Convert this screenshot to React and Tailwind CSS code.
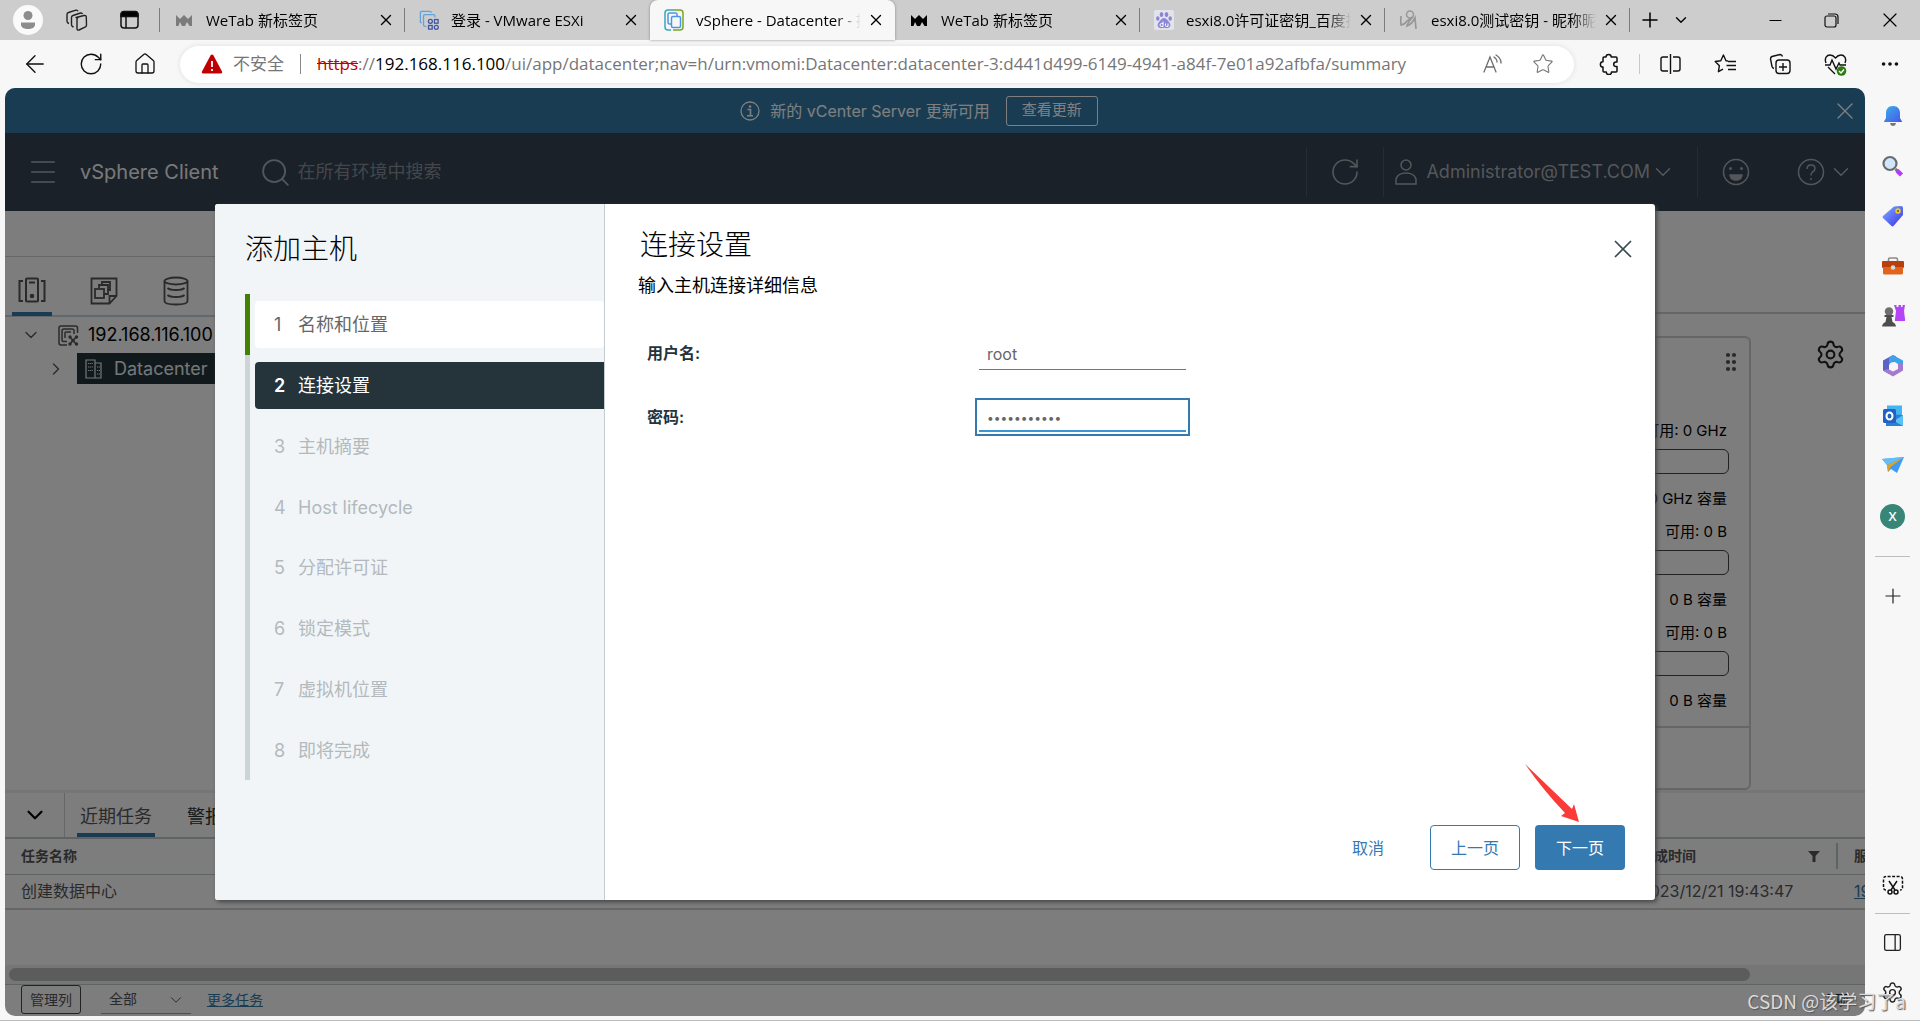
import React, { useState } from "react";
import {
  ArrowLeft,
  ChevronDown,
  ChevronRight,
  Ellipsis,
  GripVertical,
  House,
  Menu,
  Minus,
  PanelRight,
  Plus,
  RotateCw,
  Search,
  Settings,
  Star,
  X,
} from "lucide-react";

const tabs = [
  { title: "WeTab 新标签页", icon: "wetabGray" },
  { title: "登录 - VMware ESXi", icon: "esxi" },
  { title: "vSphere - Datacenter - 摘", icon: "vsphere", active: true },
  { title: "WeTab 新标签页", icon: "wetab" },
  { title: "esxi8.0许可证密钥_百度搜", icon: "baidu" },
  { title: "esxi8.0测试密钥 - 昵称昵", icon: "nick" },
];

const steps = [
  "名称和位置",
  "连接设置",
  "主机摘要",
  "Host lifecycle",
  "分配许可证",
  "锁定模式",
  "虚拟机位置",
  "即将完成",
];

const capacity = [
  { free: "可用: 0 GHz", total: "0 GHz 容量" },
  { free: "可用: 0 B", total: "0 B 容量" },
  { free: "可用: 0 B", total: "0 B 容量" },
];

function Favicon({ name }) {
  if (name === "wetab" || name === "wetabGray") {
    return (
      <svg width="20" height="20" viewBox="0 0 20 20" className="shrink-0">
        <path
          d="M2 5l4 4 4-4 4 4 4-4v11h-2.500l-2.500-4-2 4H8l-2-4-1.500 4H2z"
          fill={name === "wetab" ? "#000" : "#7b7b7b"}
        />
      </svg>
    );
  }
  if (name === "esxi") {
    return (
      <svg width="20" height="22" viewBox="0 0 22 22" fill="none" className="shrink-0">
        <path d="M3 14H2.500Q1.500 14 1.500 13V3Q1.500 1.500 3 1.500H12Q13.500 1.500 13.500 3" stroke="#5ea3e0" strokeWidth="1.400" />
        <path d="M8 18H6.500Q5 18 5 16.500V6.500Q5 5 6.500 5H16Q17.500 5 17.500 6.500V8" stroke="#5ea3e0" strokeWidth="1.400" />
        <g stroke="#4054a0" strokeWidth="1.400">
          <circle cx="12.500" cy="12.500" r="2.200" />
          <rect x="17" y="10.500" width="4" height="4" />
          <rect x="10.500" y="17" width="4" height="4" />
          <circle cx="19" cy="19" r="2.200" />
        </g>
      </svg>
    );
  }
  if (name === "vsphere") {
    return (
      <svg width="20" height="22" viewBox="0 0 20 22" fill="none" className="shrink-0">
        <path d="M10 1H4Q1 1 1 4V18Q1 21 4 21H7" stroke="#3aa7b8" strokeWidth="1.500" />
        <path d="M10 1H16Q19 1 19 4V18Q19 21 16 21H9" stroke="#78a81c" strokeWidth="1.500" />
        <rect x="4" y="4" width="9" height="11" rx="1.500" stroke="#4b96e6" strokeWidth="1.500" />
        <rect x="7.500" y="7.500" width="9" height="11" rx="1.500" fill="#f7f7f7" stroke="#4b96e6" strokeWidth="1.500" />
      </svg>
    );
  }
  if (name === "baidu") {
    return (
      <svg width="20" height="20" viewBox="0 0 20 20" className="shrink-0">
        <rect width="20" height="20" rx="2" fill="#e3e3ea" />
        <g fill="#8c86d8">
          <ellipse cx="7.500" cy="4.500" rx="1.800" ry="2.600" />
          <ellipse cx="12.500" cy="4.500" rx="1.800" ry="2.600" />
          <ellipse cx="3.800" cy="8.500" rx="1.700" ry="2.300" />
          <ellipse cx="16.200" cy="8.500" rx="1.700" ry="2.300" />
          <path d="M10 8c2.500 0 3.500 2.500 5 4s2.500 5-1 6c-1.500.4-2.500-.2-4-.2s-2.500.6-4 .2c-3.500-1-2.500-4.500-1-6s2.500-4 5-4z" />
        </g>
        <path d="M9 11.500v5H7.500a1.500 1.500 0 010-3H9M11.500 13.500v2q0 1 1 1h1.500v-3" fill="none" stroke="#fff" />
      </svg>
    );
  }
  return (
    <svg width="20" height="20" viewBox="0 0 20 20" fill="none" stroke="#979797" className="shrink-0">
      <circle cx="11" cy="4.500" r="3.500" strokeWidth="1.500" />
      <path d="M2 6q-.5 6 0 9 3 0 6-4l6-4q-5 5-6 9 5-2 8-8l1 11" strokeWidth="1.700" />
    </svg>
  );
}

function BrowserTab({ tab, divider }) {
  return (
    <div
      className={
        "relative flex h-10 w-[245px] items-center pl-[14px] pr-2 " +
        (tab.active ? "rounded-t-lg bg-[#f7f7f7] shadow-[0_0_3px_#888]" : "")
      }
    >
      <Favicon name={tab.icon} />
      <span className="ml-3 flex-1 overflow-hidden whitespace-nowrap mask-r-from-85%">{tab.title}</span>
      <button type="button" aria-label="关闭标签页" className="ml-1 p-[2px]">
        <X size={18} strokeWidth={1.8} />
      </button>
      {divider && <span className="absolute right-0 h-6 w-px bg-[#7c7c7c]" />}
    </div>
  );
}

function TabStrip() {
  return (
    <div className="flex h-10 shrink-0 items-center bg-[#cdcdcd] text-[15px] shadow-[0_1px_1px_#bbb]">
      <div className="relative flex h-full w-[160px] items-center pl-[13px]">
        <button type="button" aria-label="个人资料">
          <svg width="30" height="30" viewBox="0 0 30 30">
            <circle cx="15" cy="15" r="15" fill="#fafafa" />
            <circle cx="15" cy="10.500" r="4.500" fill="#8d8d8d" />
            <path d="M8 17.500h14v2c0 3-3 4.500-7 4.500s-7-1.500-7-4.500z" fill="#8d8d8d" />
          </svg>
        </button>
        <button type="button" aria-label="工作区" className="ml-[22px]">
          <svg width="24" height="24" viewBox="0 0 24 24" fill="none" stroke="#222" strokeWidth="1.400" strokeLinejoin="round">
            <path d="M11 9.500l8-2q2-.4 2.300 1.500l.2 8q0 1.500-1.500 2.200l-6 2.800q-2 .6-2-1.500V11q0-1 1-1.500z" />
            <path d="M8.500 19l-1-.5q-1-.5-1-2V9.500Q6.500 8 8 7.500l7.500-2.500q1.500-.3 2 1" />
            <path d="M4 15.500l-1-.5q-1-.5-1-2V6.500Q2 5 3.500 4.500L11 2.200q1.500-.3 2 1" />
          </svg>
        </button>
        <button type="button" aria-label="Tab 操作菜单" className="ml-[30px]">
          <svg width="22" height="20" viewBox="0 0 22 20" fill="none" stroke="#111" strokeWidth="1.500">
            <rect x="2" y="2" width="17" height="16" rx="3" />
            <path d="M2 5q0-3.500 3-3.500h11q3 0 3 3.500v1.500H2z" fill="#000" />
            <path d="M7 7v11" />
          </svg>
        </button>
        <span className="absolute right-0 h-6 w-px bg-[#7c7c7c]" />
      </div>
      {tabs.map((tab, i) => (
        <BrowserTab key={i} tab={tab} divider={i !== 1 && i !== 2} />
      ))}
      <button type="button" aria-label="新建标签页" className="ml-2">
        <Plus size={24} strokeWidth={1.5} />
      </button>
      <button type="button" aria-label="搜索标签页" className="ml-2.5">
        <ChevronDown size={18} strokeWidth={1.8} />
      </button>
      <div className="ml-auto flex items-center gap-[39px] pr-[18px]">
        <button type="button" aria-label="最小化">
          <Minus size={19} strokeWidth={1.4} />
        </button>
        <button type="button" aria-label="还原">
          <svg width="15" height="15" viewBox="0 0 15 15" fill="none" stroke="#111" strokeWidth="1.200">
            <rect x="1" y="3" width="11" height="11" rx="2" />
            <path d="M4 1h7q3 0 3 3v7" />
          </svg>
        </button>
        <button type="button" aria-label="关闭">
          <X size={24} strokeWidth={1.2} />
        </button>
      </div>
    </div>
  );
}

function Toolbar() {
  return (
    <div className="flex h-12 shrink-0 items-center bg-[#f7f7f7] pr-[19px] text-[17px] text-[#111]">
      <div className="flex w-[180px] items-center gap-[29px] pl-[21px]">
        <button type="button" aria-label="后退">
          <ArrowLeft size={28} strokeWidth={1.2} />
        </button>
        <button type="button" aria-label="刷新">
          <RotateCw size={26} strokeWidth={1.3} />
        </button>
        <button type="button" aria-label="主页">
          <House size={24} strokeWidth={1.3} />
        </button>
      </div>
      <div className="flex h-[37px] flex-1 items-center rounded-full bg-white pl-[21px] pr-[20px] whitespace-nowrap text-[#767676] shadow-[0_0_5px_#ddd]">
        <svg width="22" height="20" viewBox="0 0 22 20">
          <path d="M9.500 1.500q1.500-2 3 0l8.500 16q.5 2-1.500 2h-17q-2 0-1.500-2z" fill="#c00000" />
          <path d="M11 7v6M11 15v2" stroke="#fff" strokeWidth="1.800" />
        </svg>
        <span className="ml-[10px]">不安全</span>
        <span className="mx-4 h-5 w-px bg-[#8a8a8a]" />
        <span className="flex-1">
          <span className="text-[#c00000] line-through">https</span>://
          <span className="text-black">192.168.116.100</span>
          /ui/app/datacenter;nav=h/urn:vmomi:Datacenter:datacenter-3:d441d499-6149-4941-a84f-7e01a92afbfa/summary
        </span>
        <button type="button" aria-label="朗读此页内容" className="mr-7">
          <svg width="22" height="22" viewBox="0 0 22 22" fill="none" stroke="#6d6d6d" strokeWidth="1.300" strokeLinecap="round">
            <path d="M2 19L8 4l6 15M4 14h8M12 4q3 2 3 5M14 2q5 3 5 8" />
          </svg>
        </button>
        <button type="button" aria-label="收藏">
          <Star size={22} strokeWidth={1.2} />
        </button>
      </div>
      <div className="flex items-center pl-[24px]">
        <button type="button" aria-label="扩展">
          <svg width="22" height="22" viewBox="0 0 22 22" fill="none" stroke="#111" strokeWidth="1.500" strokeLinejoin="round">
            <path d="M8 4a2.600 2.600 0 015.200 0H18q1 0 1 1v4h-1a2.300 2.300 0 000 4.600h1V18q0 1-1 1h-4.500a2.600 2.600 0 01-5.200 0H6q-1 0-1-1v-4a2.600 2.600 0 010-5.200V5q0-1 1-1z" />
          </svg>
        </button>
        <span className="mx-[19px] h-5 w-px bg-[#cacaca]" />
        <div className="flex items-center gap-8">
          <button type="button" aria-label="分屏">
            <svg width="23" height="22" viewBox="0 0 23 22" fill="none" stroke="#111" strokeWidth="1.400">
              <path d="M9 4H4Q2 4 2 6V16Q2 18 4 18H9M14 4h5q2 0 2 2v10q0 2-2 2h-5M11.500 1v20" />
            </svg>
          </button>
          <button type="button" aria-label="收藏夹">
            <svg width="23" height="22" viewBox="0 0 23 22" fill="none" stroke="#111" strokeWidth="1.400" strokeLinejoin="round">
              <path d="M14 8l-2-.3-2.600-5.700-2.600 5.700-5.600.8 4.200 4.200-1 6 4.600-2.500M14 8.500h8M12.500 12.500H22M14 16.500h8" />
            </svg>
          </button>
          <button type="button" aria-label="集锦">
            <svg width="23" height="22" viewBox="0 0 23 22" fill="none" stroke="#111" strokeWidth="1.400">
              <path d="M5 15.500q-1.500-.5-2-2L1.500 6q0-2 1.500-2.500L11 1.500q2 0 2.500 2" />
              <rect x="7" y="7" width="14" height="13.500" rx="3" />
              <path d="M14 10v8M10 14h8" />
            </svg>
          </button>
          <button type="button" aria-label="浏览器概要">
            <svg width="23" height="23" viewBox="0 0 23 23" fill="none" stroke="#111" strokeWidth="1.400">
              <path d="M2 10C0 5 3 2 6 2q3 0 5.500 3Q14 2 17 2c3 0 6 3 4 8M4 14l7 7" />
              <path d="M1 12h5l2-5 4 9 3-6 1 2h6" />
              <circle cx="17.500" cy="18" r="4.800" fill="#2b7d10" stroke="none" />
              <path d="M15 18l2 2 3-3.500" stroke="#fff" />
            </svg>
          </button>
          <button type="button" aria-label="设置及其他">
            <Ellipsis size={22} strokeWidth={2} />
          </button>
        </div>
      </div>
    </div>
  );
}

function SideBar() {
  return (
    <nav className="flex w-[55px] shrink-0 flex-col items-center bg-[#f7f7f7] pt-4 text-[#222]">
      <div className="flex flex-col items-center gap-[26px]">
        <svg width="24" height="24" viewBox="0 0 24 24">
          <defs>
            <linearGradient id="bell" x1="0" y1="0" x2="1" y2="1">
              <stop offset="0" stopColor="#37b0e8" />
              <stop offset="1" stopColor="#4a55ee" />
            </linearGradient>
          </defs>
          <path d="M9 19h6q-.5 3-3 3t-3-3z" fill="#777" />
          <path d="M12 2c5 0 7 3.500 7 7v5l2 3.500v.5H3v-.5L5 14V9c0-3.500 2-7 7-7z" fill="url(#bell)" />
        </svg>
        <svg width="24" height="24" viewBox="0 0 24 24">
          <circle cx="9" cy="9.500" r="6.500" fill="#cfe6fb" stroke="#6b6b6b" strokeWidth="2.200" />
          <path d="M14.500 15l2 2" stroke="#777" strokeWidth="3" />
          <path d="M16 16.500l4.500 4.500" stroke="#b43af5" strokeWidth="4.500" />
        </svg>
        <svg width="24" height="24" viewBox="0 0 24 24">
          <defs>
            <linearGradient id="tag" x1="0" y1="0" x2="1" y2="1">
              <stop offset="0" stopColor="#7fb0ff" />
              <stop offset="1" stopColor="#3b2fe8" />
            </linearGradient>
          </defs>
          <path d="M13 2.500L20 2q2 0 2 2v7L12.500 22q-1 .8-2 0L2 14q-1-1 0-2z" fill="url(#tag)" />
          <circle cx="17" cy="7" r="2" fill="#7a7a20" stroke="#f8d21c" strokeWidth="1.400" />
        </svg>
        <svg width="24" height="24" viewBox="0 0 24 24">
          <path d="M7.500 8V5.500q0-1.500 1.500-1.500h6q1.500 0 1.500 1.500V8" fill="none" stroke="#8a8a8a" strokeWidth="1.600" />
          <rect x="1" y="7" width="22" height="7" rx="1" fill="#b8400c" />
          <path d="M2 13h20v6q0 1.500-1.500 1.500h-17Q2 20.500 2 19z" fill="#e2641c" />
          <circle cx="12" cy="13.500" r="2.300" fill="#d8d8d8" />
        </svg>
        <svg width="24" height="24" viewBox="0 0 24 24">
          <path d="M13 1h2.500v2h2V1h2.500v2h1.500V1H24l-1 6 1 8v2H14v-2l1-8z" fill="#b445f5" />
          <circle cx="8" cy="7.500" r="4.200" fill="#6f6f6f" />
          <path d="M3.500 11h9v2h-2l1 5q3 1 3.500 4.500H1Q1.500 19 4.500 18l1-5h-2z" fill="#4d4d4d" />
        </svg>
        <svg width="24" height="24" viewBox="0 0 24 24">
          <path d="M12 1L2 6.500v10L8 20v-9l7-4V2.500z" fill="#5a63c8" />
          <path d="M12 1l-4 3v6l5-2.500 4 2.500v7l5-2.500V6.500z" fill="#3fa3ea" />
          <path d="M2 16.500l10 6 10-6v-6l-5-1.500v6l-5 2.500-5-2.500z" fill="#a678d0" />
          <circle cx="12" cy="12" r="3.800" fill="#f7f7f7" />
        </svg>
        <svg width="24" height="24" viewBox="0 0 24 24">
          <rect x="6" y="1.500" width="15" height="11" fill="#44b5f2" />
          <path d="M5 10l17 1v11H5z" fill="#2b7ed8" />
          <path d="M22 11l-9 6 9 5z" fill="#5ac1f5" />
          <rect x="2" y="5" width="13" height="14" rx="1.500" fill="#1f62c4" />
          <ellipse cx="8.500" cy="12" rx="3" ry="3.500" fill="none" stroke="#fff" strokeWidth="2" />
        </svg>
        <svg width="24" height="24" viewBox="0 0 24 24">
          <path d="M1 5l22-2-7 16-6-4-3 3-1-7z" fill="#3f9bf0" />
          <path d="M23 3L6 11l1 7 2.500-5z" fill="#e6a11a" />
          <path d="M1 5l22-2L6 11z" fill="#63bdf7" />
        </svg>
        <span className="flex size-[25px] items-center justify-center rounded-full bg-[#388677] text-[13px] font-semibold text-white">
          X
        </span>
      </div>
      <span className="mt-[27px] h-px w-[35px] bg-[#bdbdbd]" />
      <button type="button" aria-label="自定义" className="mt-[27px]">
        <Plus size={24} strokeWidth={1.2} />
      </button>
      <button type="button" aria-label="截图" className="mt-auto">
        <svg width="22" height="22" viewBox="0 0 22 22" fill="none" stroke="#111" strokeWidth="1.500">
          <path d="M4 16Q1.500 16 1.500 13.500V5Q1.500 2.500 4 2.500H18Q20.500 2.500 20.500 5v8.500Q20.500 16 18 16" strokeDasharray="3 1.500" />
          <path d="M7 7l6 9M15 7l-6 9" />
          <circle cx="8" cy="18" r="2" />
          <circle cx="14" cy="18" r="2" />
        </svg>
      </button>
      <span className="mt-[17px] mb-[18px] h-px w-[35px] bg-[#bdbdbd]" />
      <button type="button" aria-label="侧边栏">
        <PanelRight size={21} strokeWidth={1.5} />
      </button>
      <button type="button" aria-label="设置" className="mt-[28px] mb-4">
        <Settings size={23} strokeWidth={1.5} />
      </button>
    </nav>
  );
}

function UpdateBanner() {
  return (
    <div className="relative flex h-[45px] shrink-0 items-center justify-center bg-[#3278a6] pr-8 text-base text-white">
      <svg width="20" height="20" viewBox="0 0 20 20" fill="none" stroke="currentColor" strokeWidth="1.300">
        <circle cx="10" cy="10" r="9" />
        <path d="M7.500 8.500h3v6M7 14.700h6" strokeWidth="1.600" />
        <circle cx="10" cy="5.500" r="1.300" fill="currentColor" stroke="none" />
      </svg>
      <span className="ml-[10px]">新的 vCenter Server 更新可用</span>
      <button type="button" className="ml-4 h-[30px] rounded-[3px] border border-white px-[15px] text-[15px]">
        查看更新
      </button>
      <button type="button" aria-label="关闭" className="absolute right-[6px]">
        <X size={28} strokeWidth={1.2} />
      </button>
    </div>
  );
}

function HeaderBar() {
  return (
    <header className="flex h-[78px] shrink-0 items-center bg-[#344252] text-lg text-[#a9afb3]">
      <button type="button" aria-label="菜单" className="ml-[21px]">
        <Menu size={34} strokeWidth={1.1} />
      </button>
      <span className="ml-5 text-xl text-[#f2f2f2]">vSphere Client</span>
      <label className="ml-10 flex flex-1 items-center">
        <Search size={33} strokeWidth={1.3} />
        <input
          aria-label="搜索"
          placeholder="在所有环境中搜索"
          className="ml-1.5 w-[300px] bg-transparent outline-0 placeholder:text-[#868f97]"
        />
      </label>
      <div className="flex h-[50px] items-center border-l border-[#4e5965]">
        <button type="button" aria-label="刷新" className="px-[22px]">
          <RotateCw size={32} strokeWidth={1.2} />
        </button>
        <button type="button" className="flex h-full items-center border-l border-[#4e5965] pl-2.5">
          <svg width="24" height="28" viewBox="0 0 24 28" fill="none" stroke="currentColor" strokeWidth="1.500">
            <circle cx="12" cy="7" r="5" />
            <path d="M2 26v-5q2-6 10-6t10 6v5z" />
          </svg>
          <span className="ml-2">Administrator@TEST.COM</span>
          <ChevronDown size={26} strokeWidth={1.4} />
        </button>
        <button type="button" aria-label="反馈" className="ml-[21px] h-full border-l border-[#4e5965] pl-6">
          <svg width="28" height="28" viewBox="0 0 28 28" fill="none" stroke="currentColor" strokeWidth="1.500">
            <circle cx="14" cy="14" r="12.500" />
            <path d="M8 17h12q-1 5-6 5t-6-5z" fill="currentColor" />
            <circle cx="8.500" cy="10.500" r="1.500" fill="currentColor" stroke="none" />
            <circle cx="19.500" cy="10.500" r="1.500" fill="currentColor" stroke="none" />
          </svg>
        </button>
        <button type="button" aria-label="帮助" className="mr-[11px] ml-[47px] flex items-center gap-[3px]">
          <svg width="28" height="28" viewBox="0 0 28 28" fill="none" stroke="currentColor" strokeWidth="1.500">
            <circle cx="14" cy="14" r="12.500" />
            <path d="M10 11q0-4 4-4t4 3.500q0 2-2.500 3.500Q14 15 14 17.500M14 20v2" />
          </svg>
          <ChevronDown size={26} strokeWidth={1.4} />
        </button>
      </div>
    </header>
  );
}

function Inventory() {
  return (
    <aside className="w-[300px] shrink-0 border-r border-[#ccc] text-lg text-black">
      <div className="h-[46px] border-b border-[#ccc]" />
      <div className="flex h-[60px] items-center border-b-2 border-[#c5d3da] text-[#555]">
        <button type="button" aria-label="主机和集群" className="ml-[7px] flex h-[60px] w-10 items-center justify-center border-b-4 border-[#3278a6] pt-3">
          <svg width="28" height="26" viewBox="0 0 28 26" fill="none" stroke="currentColor" strokeWidth="2">
            <rect x="8" y="1.500" width="12" height="23" rx="1" />
            <path d="M5 4H1.500v20H5M23 4h3.500v20H23M11 5.500h6" />
            <circle cx="14" cy="19" r="1.300" fill="currentColor" />
          </svg>
        </button>
        <button type="button" aria-label="虚拟机和模板" className="ml-[38px] pt-2.5">
          <svg width="28" height="28" viewBox="0 0 28 28" fill="none" stroke="currentColor" strokeWidth="1.800">
            <path d="M1.500 1.500h25V19l-7 7.500h-18zM19.500 26v-7h7" />
            <rect x="5" y="12" width="9" height="9" />
            <path d="M9 11V8h9v9h-4M12 7V5h8v8h-2" />
          </svg>
        </button>
        <button type="button" aria-label="存储" className="ml-[44px] pt-2.5">
          <svg width="28" height="30" viewBox="0 0 28 30" fill="none" stroke="currentColor" strokeWidth="1.800">
            <ellipse cx="14" cy="5" rx="11.500" ry="3.500" />
            <path d="M2.500 5v20q0 3.500 11.500 3.500T25.500 25V5M5.500 12q2 2 8.500 2t8.500-2M5.500 19q2 2 8.500 2t8.500-2" />
          </svg>
        </button>
      </div>
      <ul>
        <li className="flex h-9 items-center pl-4">
          <ChevronDown size={20} strokeWidth={1.6} className="text-[#555]" />
          <svg width="21" height="21" viewBox="0 0 21 21" fill="none" stroke="#555" strokeWidth="1.500" className="ml-[17px]">
            <path d="M19.500 8V3Q19.500 1 17.500 1H3Q1 1 1 3V18Q1 20 3 20H9" />
            <path d="M16 9V6Q16 4 14 4H6Q4 4 4 6v9q0 1.500 1.500 1.500H9M7 13V8q0-1 1-1h5" />
            <path d="M12 12l6 7M18 12l-6 7" />
            <g fill="#555" stroke="none">
              <circle cx="12" cy="12" r="1.700" />
              <circle cx="18.500" cy="12" r="1.700" />
              <circle cx="15" cy="15.500" r="1.700" />
              <circle cx="12" cy="19" r="1.700" />
              <circle cx="18.500" cy="19" r="1.700" />
            </g>
          </svg>
          <span className="ml-[9px]">192.168.116.100</span>
        </li>
        <li className="flex h-[31px] items-center pl-[41px]">
          <ChevronRight size={20} strokeWidth={1.6} className="text-[#555]" />
          <span className="ml-[11px] flex h-full flex-1 items-center bg-[#25333a] pl-2 text-[#e8eef0]">
            <svg width="17" height="20" viewBox="0 0 17 20" fill="none" stroke="currentColor" strokeWidth="1.200">
              <path d="M1 19V1h9v18zM10 4h6v15h-6" />
              <path d="M3 4.500h5M3 8h5M3 11.500h5M12 8h3M12 11.500h3M12 15h3" strokeDasharray="1.300 .8" />
            </svg>
            <span className="ml-3">Datacenter</span>
          </span>
        </li>
      </ul>
    </aside>
  );
}

function Summary() {
  return (
    <main className="flex min-w-0 flex-1 flex-col">
      <div className="h-[103px] shrink-0 border-b-2 border-[#ccc]" />
      <div className="flex flex-1 justify-end pt-[22px]">
        <section className="flex w-[480px] flex-col rounded-md border-2 border-[#ccc] text-[15px] text-black">
          <div className="flex h-[48px] shrink-0 items-center justify-end pr-1.5">
            <GripVertical size={24} strokeWidth={2.2} className="text-[#555]" />
          </div>
          <div className="mt-7 flex-1 pr-5 text-right">
            {capacity.map((item, i) => (
              <div key={i} className="mb-[9px]">
                <p className="h-[35px] pr-0.5 leading-[34px]">{item.free}</p>
                <div className="h-[25px] rounded-md border border-[#444]" />
                <p className="h-8 pt-[13px] pr-0.5 leading-6">{item.total}</p>
              </div>
            ))}
          </div>
          <div className="h-[62px] border-t-2 border-[#ccc]" />
        </section>
        <button type="button" aria-label="设置" className="mt-[3px] mr-[19px] ml-[64px] self-start text-[#222]">
          <Settings size={31} strokeWidth={1.6} />
        </button>
      </div>
    </main>
  );
}

function TaskPanel() {
  return (
    <section className="flex shrink-0 flex-col border-t-3 border-[#ececec] text-[#555]">
      <div className="flex h-[46px] items-stretch border-b-2 border-[#bcc6cc] text-lg">
        <button type="button" aria-label="折叠" className="flex w-[60px] items-center justify-center border-r border-[#ccc] text-black">
          <ChevronDown size={26} strokeWidth={2} />
        </button>
        <button type="button" className="ml-3 border-b-4 border-[#3278a6] px-[3px] pt-2">
          近期任务
        </button>
        <button type="button" className="ml-7 border-b-4 border-transparent px-1 pt-2 text-[#25333a]">
          警报
        </button>
      </div>
      <div className="overflow-hidden">
        <table className="w-[calc(100%+113px)] table-fixed text-left">
          <colgroup>
            <col className="w-[253px]" />
            <col />
            <col />
            <col />
            <col className="w-[214px]" />
            <col className="w-[140px]" />
          </colgroup>
          <thead>
            <tr className="h-[35px] border-b border-[#bcc6cc] text-sm">
              <th className="pl-4">任务名称</th>
              <th className="pl-4">目标</th>
              <th className="pl-4">状态</th>
              <th className="pl-4">启动者</th>
              <th className="pl-4">
                <div className="flex items-center justify-between border-r-2 border-[#bcc6cc] pr-4">
                  <span className="leading-[26px]">完成时间</span>
                  <svg width="12" height="11" viewBox="0 0 12 11">
                    <path d="M0 0h12L7.500 5v6h-3V5z" fill="#555" />
                  </svg>
                </div>
              </th>
              <th className="pl-4">服务器</th>
            </tr>
          </thead>
          <tbody>
            <tr className="h-[35px] border-b-2 border-[#ccc] text-base">
              <td className="pl-4">创建数据中心</td>
              <td className="pl-4">192.168.116.100</td>
              <td className="pl-4">已完成</td>
              <td className="pl-4">Administrator</td>
              <td className="pl-4 whitespace-nowrap">2023/12/21 19:43:47</td>
              <td className="pl-4">
                <a href="#server" className="text-[#3278a6] underline">
                  192.168
                </a>
              </td>
            </tr>
          </tbody>
        </table>
      </div>
      <div className="mt-[55px] h-[19px] bg-[#ececec] px-1 py-[3px]">
        <div className="h-[13px] w-[94%] rounded-full bg-[#b8b8b8]" />
      </div>
      <footer className="flex h-8 items-start border-t border-[#bcc6cc] px-4 text-sm">
        <button type="button" className="h-[29px] rounded-[3px] border border-[#444] px-2">
          管理列
        </button>
        <select aria-label="筛选" className="ml-5 h-[29px] w-[90px] appearance-none border-b border-[#8fa5b3] px-2 outline-0">
          <option>全部</option>
        </select>
        <ChevronDown size={18} strokeWidth={1.3} className="mt-1.5 -ml-6" />
        <a href="#more" className="ml-[22px] leading-[29px] text-[#3278a6] underline">
          更多任务
        </a>
        <span className="ml-auto leading-[29px] text-[#222]">1 项</span>
      </footer>
    </section>
  );
}

function AddHostWizard() {
  const [user, setUser] = useState("root");
  const [password, setPassword] = useState("abcdefghijk");
  const current = 1;

  return (
    <div className="absolute inset-0 flex items-center justify-center bg-black/50">
      <div
        role="dialog"
        aria-labelledby="wizard-title"
        className="flex h-3/4 w-[90%] max-w-[1440px] overflow-hidden rounded-[3px] bg-white shadow-[2px_2px_4px_#444]"
      >
        <div className="flex w-[390px] shrink-0 flex-col border-r border-[#c4cdd2] bg-[#f1f5f8] pl-[30px]">
          <h2 id="wizard-title" className="mt-6 text-[28px] leading-[42px] font-light text-black">
            添加主机
          </h2>
          <ol className="mt-6 grid h-[486px] grid-rows-8 text-lg">
            {steps.map((step, i) => (
              <li
                key={step}
                className={
                  "flex items-center border-l-5 pl-[5px] " + (i < current ? "border-[#428200]" : "border-[#cdd4d7]")
                }
              >
                <button
                  type="button"
                  className={
                    "flex h-[47px] w-full items-center pt-[2px] pl-[19px] " +
                    (i < current
                      ? "rounded bg-white text-[#666]"
                      : i === current
                        ? "rounded-l bg-[#25333a] text-white"
                        : "text-[#b3b9bc]")
                  }
                >
                  <span className={i === current ? "w-6 text-left font-semibold" : "w-6 text-left"}>{i + 1}</span>
                  {step}
                </button>
              </li>
            ))}
          </ol>
        </div>
        <div className="flex flex-1 flex-col text-black">
          <div className="flex items-start justify-between pt-5 pr-[17px] pl-[35px]">
            <h3 className="text-[28px] leading-[42px] font-light">连接设置</h3>
            <button type="button" aria-label="关闭" className="mt-[10px] text-[#3a4a52]">
              <X size={30} strokeWidth={1.4} />
            </button>
          </div>
          <p className="mt-2 pl-[33px] text-lg leading-6">输入主机连接详细信息</p>
          <form className="mt-9 flex flex-col gap-[23px] pl-[42px] text-base text-[#666]">
            <div className="flex h-10 items-center">
              <label htmlFor="user" className="w-[332px] pb-[2px] font-semibold text-[#25333a]">
                用户名:
              </label>
              <input
                id="user"
                value={user}
                onChange={(e) => setUser(e.target.value)}
                className="h-8 w-[207px] border-b border-[#6a7a81] px-2 outline-0"
              />
            </div>
            <div className="flex h-10 items-center">
              <label htmlFor="password" className="w-[328px] font-semibold text-[#25333a]">
                密码:
              </label>
              <div className="border-2 border-[#3579b1] px-[2px] pb-[2px]">
                <input
                  id="password"
                  type="password"
                  value={password}
                  onChange={(e) => setPassword(e.target.value)}
                  className="block h-8 w-[207px] border-b-2 border-[#3e95d3] px-2 pt-1 text-xs outline-0"
                />
              </div>
            </div>
          </form>
          <div className="relative mt-auto flex justify-end gap-[15px] pr-[30px] pb-[30px] text-base text-[#3579b1]">
            <button type="button" className="mr-[15px] h-[45px] px-4">
              取消
            </button>
            <button type="button" className="h-[45px] w-[90px] rounded border border-[#3579b1]">
              上一页
            </button>
            <button type="button" className="h-[45px] w-[90px] rounded bg-[#3579b1] text-white">
              下一页
            </button>
            <svg width="56" height="60" viewBox="0 0 56 60" className="absolute right-[74px] bottom-[76px]">
              <path d="M0 0L47 45L49 40L54 58L36 52L40 49Q18 26 0 0z" fill="#fb3b38" />
            </svg>
          </div>
        </div>
      </div>
    </div>
  );
}

function App() {
  return (
    <div className="relative flex h-screen flex-col overflow-hidden bg-[#f7f7f7] font-['Open_Sans','Noto_Sans_CJK_SC',sans-serif] text-black">
      <TabStrip />
      <Toolbar />
      <div className="flex min-h-0 flex-1 border-b border-[#bbb]">
        <div className="relative mb-1 ml-[5px] flex min-w-0 flex-1 flex-col overflow-hidden rounded-[10px] bg-[#fafafa] font-['Inter','Noto_Sans_CJK_SC',sans-serif]">
          <UpdateBanner />
          <HeaderBar />
          <div className="flex min-h-0 flex-1">
            <Inventory />
            <Summary />
          </div>
          <TaskPanel />
          <AddHostWizard />
        </div>
        <SideBar />
      </div>
      <span className="absolute right-[14px] bottom-1.5 font-['Noto_Sans_CJK_SC',sans-serif] text-[19px] text-[#dadada] [text-shadow:1px_1px_1px_#555]">
        CSDN @该学习了a
      </span>
    </div>
  );
}

export default App;
